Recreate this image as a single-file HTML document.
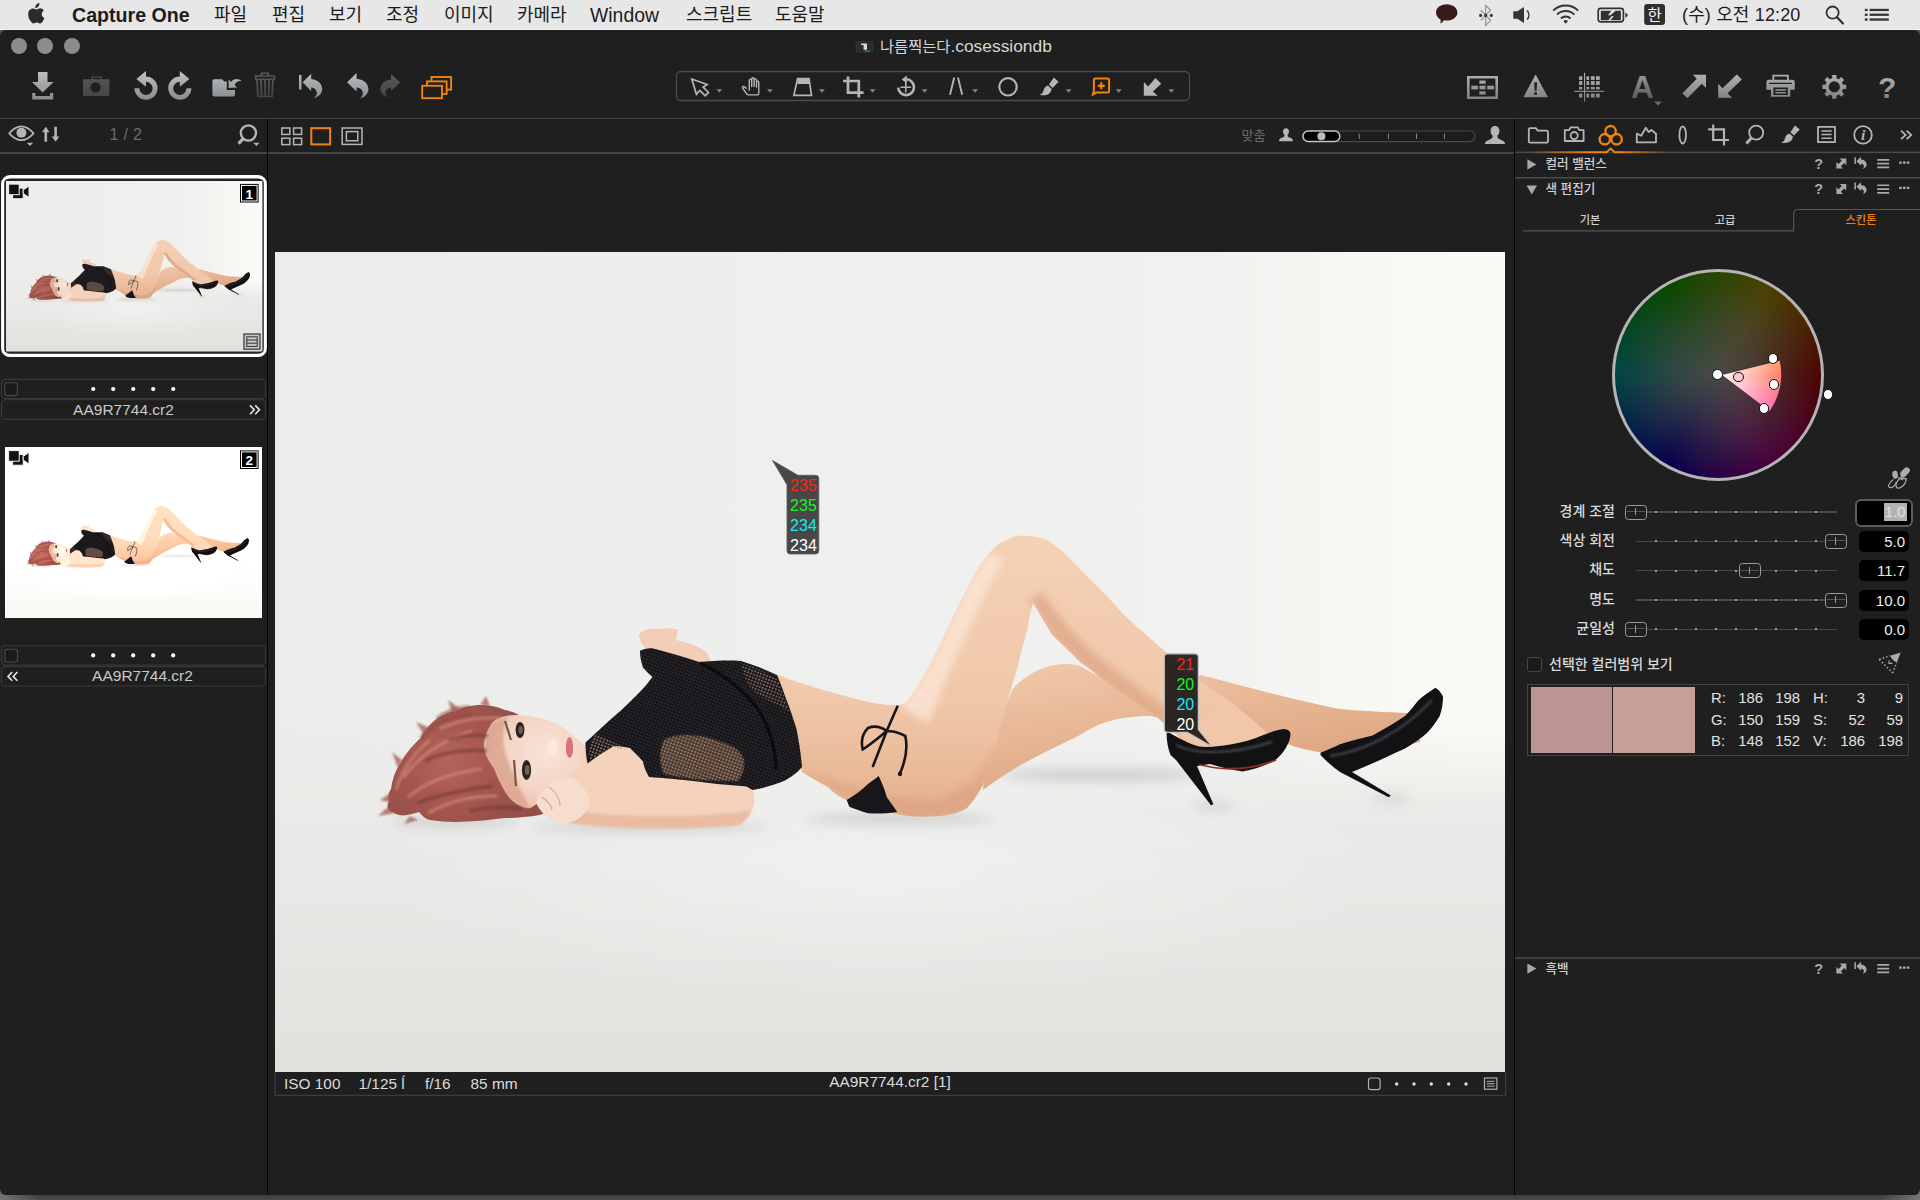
<!DOCTYPE html>
<html lang="ko">
<head>
<meta charset="utf-8">
<title>Capture One</title>
<style>
*{box-sizing:border-box;margin:0;padding:0}
html,body{width:1920px;height:1200px;overflow:hidden}
body{position:relative;background:#555;font-family:"Liberation Sans","Noto Sans CJK KR",sans-serif;color:#d0d0d0}
.abs{position:absolute}
/* ---------- menubar ---------- */
#menubar{position:absolute;left:0;top:0;width:1920px;height:29.500px;background:#e7e7e7;border-bottom:1.500px solid #f4f4f4}
#menubar .mi{position:absolute;top:1px;height:28px;line-height:28px;font-size:18px;color:#1c1c1c;white-space:nowrap}
#menubar .app{font-weight:bold;font-size:19.600px}
#menubar .lat{font-size:19.400px}
/* ---------- window ---------- */
#deskbot{position:absolute;left:0;top:1185px;width:1920px;height:15px;background:radial-gradient(circle at 0 100%,#767676 0,rgba(118,118,118,0) 40px),radial-gradient(circle at 100% 100%,#767676 0,rgba(118,118,118,0) 40px),linear-gradient(#3a3a3a 60%,#4a4a4a)}
#win{position:absolute;left:0;top:30px;width:1920px;height:1164.500px;background:#1f1f1f;border-radius:6px 6px 6px 6px;overflow:hidden}
.hl{position:absolute;height:1.500px;background:#444;box-shadow:0 1px 0 #1b1b1b}
.vl{position:absolute;width:1.400px;background:#000}
.tl{position:absolute;width:16px;height:16px;border-radius:8px;background:#8b8b90;top:7.500px}
#title{position:absolute;top:6.300px;left:880px;font-size:16px;line-height:20px;color:#d6d6d6;white-space:nowrap}
.ph{position:absolute;left:1545.500px;font-size:12.600px;line-height:17px;font-weight:500;color:#cfcfcf;white-space:nowrap}

#ce div{position:absolute}
.st{top:212.300px;width:60px;text-align:center;font-size:11.200px;line-height:16px;font-weight:500;color:#cfcfcf}
#wheel{left:1612.2px;top:268.5px;width:212px;height:212px;border-radius:50%;border:3.500px solid #b4b4b4;background:radial-gradient(circle closest-side,#494946 0%,rgba(73,73,70,0.600) 45%,rgba(73,73,70,0) 100%),conic-gradient(from 90deg,#4c0400,#48003e,#05004c,#004444,#084800,#4a4200,#4c0400)}
#wedge{left:1612.2px;top:268.5px;width:212px;height:212px;border-radius:50%;background:radial-gradient(circle closest-side,#fff 0%,rgba(255,255,255,0.850) 15%,rgba(255,255,255,0) 100%),conic-gradient(from 90deg,#ff2a00,#ff00e0,#0000ff,#00ffff,#00ff00,#ffff00,#ff2a00)}
.hd{width:10.800px;height:10.800px;border-radius:50%;border:1.400px solid #111}
.sl{left:1515px;width:100px;margin-top:-1.200px;text-align:right;font-size:14px;line-height:20px;font-weight:500;color:#dadada;white-space:nowrap}
.sl2{left:1549px;top:654px;font-size:14px;line-height:20px;font-weight:500;color:#dadada;white-space:nowrap}
.trk{left:1636px;width:201px;height:1.400px;background:#4a4a4a}
.trk::after{content:"";position:absolute;left:19.400px;top:-0.200px;width:162px;height:1.800px;background:repeating-linear-gradient(90deg,#a0a0a0 0,#a0a0a0 1.600px,transparent 1.600px,transparent 20px)}
.knob{width:22px;height:15px;border:1.300px solid #9a9a9a;border-radius:3.500px;background:#1f1f1f}
.knob::before{content:"";position:absolute;left:1px;right:1px;top:5.600px;height:1.200px;background:#555}
.knob::after{content:"";position:absolute;left:9px;top:2.500px;width:1.300px;height:7.400px;background:#9a9a9a}
.vb{left:1859px;width:50px;height:21px;border-radius:5px;background:#000;color:#ececec;font-size:15px;line-height:21px;text-align:right;padding-right:4px}
.vb.foc{left:1855px;width:57.500px;height:28.500px;border-radius:6px;border:2.200px solid #5c5c5c;padding:2.600px 3.800px 0 0;line-height:18px;color:#e2e2e2}
.vb.foc span{display:inline-block;background:#b3b3b3;height:18px;padding:0 1px 0 1px}
.cb{width:15px;height:15.500px;border:1.200px solid #454545;border-radius:3px;background:#1a1a1a}
#swbox{left:1527px;top:683.800px;width:382px;height:72.500px;border:1px solid #424242}
.sw{top:686.800px;height:66.400px}
.tv{font-size:14.900px;line-height:20px;color:#e2e2e2;white-space:nowrap}
.tv.r{text-align:right}
.fn{position:absolute;width:200px;text-align:center;font-size:15.500px;line-height:20px;color:#c9c9c9;white-space:nowrap}
.sb{position:absolute;top:1074px;font-size:15.400px;line-height:20px;color:#dcdcdc;white-space:nowrap}
svg{position:absolute;overflow:visible}
</style>
</head>
<body>
<div id="deskbot"></div>
<div id="menubar">
  <span class="mi app" style="left:72px">Capture One</span>
  <span class="mi" style="left:214px">파일</span>
  <span class="mi" style="left:272px">편집</span>
  <span class="mi" style="left:329px">보기</span>
  <span class="mi" style="left:386px">조정</span>
  <span class="mi" style="left:444px">이미지</span>
  <span class="mi" style="left:517px">카메라</span>
  <span class="mi lat" style="left:590px">Window</span>
  <span class="mi" style="left:686px">스크립트</span>
  <span class="mi" style="left:775px">도움말</span>
  <span class="mi" style="left:1682px;letter-spacing:0.150px">(수) 오전 12:20</span>
</div>
<div id="win">
  <div class="tl" style="left:11px"></div>
  <div class="tl" style="left:37px"></div>
  <div class="tl" style="left:64px"></div>
  <div id="title"><span style="font-size:15.300px">나름찍는다</span><span style="font-size:17.400px">.cosessiondb</span></div>
  <!-- main separators (coordinates relative to #win: y = page_y - 30) -->
  <div class="hl" style="left:0;top:87.900px;width:1920px"></div>
  <div class="hl" style="left:0;top:122.200px;width:1514px"></div>
  <div class="vl" style="left:266.900px;top:89px;height:1076px"></div>
  <div class="vl" style="left:1513.600px;top:89px;height:1076px"></div>
  <!-- LEFT -->
  <div id="left"></div>
  <!-- VIEWER -->
  <div id="viewer"></div>
  <!-- RIGHT -->
  <div id="right"></div>
</div>


<!-- ===== PHOTO SYMBOL (page coords of main viewer: x275..1505, y252..1072) ===== -->
<svg width="0" height="0" style="left:0;top:0">
<defs>
<linearGradient id="bgH" x1="275" y1="0" x2="1505" y2="0" gradientUnits="userSpaceOnUse"><stop offset="0" stop-color="#ececeb"/><stop offset="0.500" stop-color="#efefee"/><stop offset="0.760" stop-color="#f1f1ef"/><stop offset="0.880" stop-color="#f8f7f4"/><stop offset="1" stop-color="#fbfaf7"/></linearGradient>
<linearGradient id="flC" x1="0" y1="770" x2="0" y2="1072" gradientUnits="userSpaceOnUse"><stop offset="0" stop-color="#ebebe9"/><stop offset="0.350" stop-color="#e8e8e6"/><stop offset="1" stop-color="#e1e1de"/></linearGradient>
<linearGradient id="flM" x1="0" y1="730" x2="0" y2="810" gradientUnits="userSpaceOnUse"><stop offset="0" stop-color="#fff" stop-opacity="0"/><stop offset="1" stop-color="#fff" stop-opacity="1"/></linearGradient>
<mask id="flMask" maskUnits="userSpaceOnUse" x="275" y="700" width="1230" height="372"><rect x="275" y="700" width="1230" height="372" fill="url(#flM)"/></mask>
<radialGradient id="bgF" cx="880" cy="870" r="1" gradientUnits="userSpaceOnUse" gradientTransform="translate(880 870) scale(520 130) translate(-880 -870)"><stop offset="0" stop-color="#fff" stop-opacity="0.350"/><stop offset="1" stop-color="#fff" stop-opacity="0"/></radialGradient>
<linearGradient id="skA" x1="0" y1="530" x2="0" y2="820" gradientUnits="userSpaceOnUse"><stop offset="0" stop-color="#f5d1b6"/><stop offset="0.600" stop-color="#f0c7a9"/><stop offset="1" stop-color="#e4b08d"/></linearGradient>
<linearGradient id="skB" x1="1020" y1="660" x2="1040" y2="790" gradientUnits="userSpaceOnUse"><stop offset="0" stop-color="#f1c9ac"/><stop offset="1" stop-color="#e0a985"/></linearGradient>
<radialGradient id="hairG" cx="450" cy="762" r="78" gradientUnits="userSpaceOnUse"><stop offset="0" stop-color="#b5645a"/><stop offset="0.600" stop-color="#a4554d"/><stop offset="1" stop-color="#935049"/></radialGradient>
<radialGradient id="faceG" cx="545" cy="752" r="55" gradientUnits="userSpaceOnUse"><stop offset="0" stop-color="#f9e4d8"/><stop offset="0.700" stop-color="#f3d5c5"/><stop offset="1" stop-color="#ecc5b1"/></radialGradient>
<pattern id="mesh" width="3.200" height="3.200" patternUnits="userSpaceOnUse" patternTransform="rotate(20)"><circle cx="1.600" cy="1.600" r="1.050" fill="#b08a72"/></pattern>
<pattern id="mesh2" width="3.200" height="3.200" patternUnits="userSpaceOnUse" patternTransform="rotate(20)"><circle cx="1.600" cy="1.600" r="0.800" fill="#4a4040"/></pattern>
<filter id="soft" x="-20%" y="-100%" width="140%" height="300%"><feGaussianBlur stdDeviation="6"/></filter>
<filter id="soft2" x="-10%" y="-10%" width="120%" height="120%"><feGaussianBlur stdDeviation="1.200"/></filter>
<filter id="soft3" x="-20%" y="-20%" width="140%" height="140%"><feGaussianBlur stdDeviation="3.500"/></filter>
<clipPath id="bodyClip"><path id="bodyP" d="M776 674C800 684 830 692 860 700C880 705 895 706 905 704C915 692 925 674 932 661C940 645 946 632 951 621C958 606 965 592 972 579C978 568 983 560 988 555C994 547 1000 542 1007 540C1014 536 1020 535 1025 535.500C1034 536 1041 538 1047 540C1054 544 1058 548 1063 552C1076 565 1088 577 1100 589C1108 597 1116 606 1123 614C1138 628 1152 640 1167 653C1180 663 1190 672 1201 681C1212 689 1222 696 1232 703C1240 709 1247 715 1253 720L1270 736L1200 760L1171 729C1165 724 1160 720 1156 716C1144 708 1134 701 1123 694C1108 684 1094 672 1080 662C1070 652 1060 642 1052 635C1046 625 1040 614 1033 603C1030 612 1029 620 1028 627C1024 642 1020 656 1017 669C1010 692 1004 712 999 733C995 748 991 762 988 773C985 782 981 789 977 795C974 800 970 804 967 808C958 813 950 815 940 816C929 817 918 817 908 816C900 815 893 813 887 811L846 800C838 796 832 792 828 787C818 782 810 777 802 772Z"/></clipPath>
<symbol id="photo" viewBox="275 252 1230 820" preserveAspectRatio="none">
<rect x="275" y="252" width="1230" height="820" fill="url(#bgH)"/>
<rect x="275" y="700" width="1230" height="372" fill="url(#flC)" mask="url(#flMask)"/>
<rect x="275" y="700" width="1230" height="372" fill="url(#bgF)"/>
<!-- floor contact shadows -->
<g filter="url(#soft)" fill="#808080" opacity="0.300">
<ellipse cx="650" cy="827" rx="120" ry="4"/><ellipse cx="900" cy="819" rx="95" ry="5"/><ellipse cx="455" cy="822" rx="65" ry="4"/><ellipse cx="1213" cy="806" rx="22" ry="3"/><ellipse cx="1390" cy="798" rx="22" ry="3"/><ellipse cx="1100" cy="775" rx="100" ry="6"/>
</g>
<!-- far leg -->
<path d="M1012 690C1030 668 1060 660 1080 666C1120 690 1160 700 1201 675C1250 688 1300 701 1340 709C1370 712 1395 712 1420 714L1420 742C1380 752 1340 757 1318 752C1300 749 1290 745 1280 741L1150 716C1120 716 1100 722 1080 735C1050 750 1015 765 983 790C985 760 1000 720 1012 690Z" fill="url(#skB)"/>
<!-- torso + near thigh + near shin -->
<use href="#bodyP" fill="url(#skA)"/>
<g clip-path="url(#bodyClip)">
<path d="M1030 600C1040 616 1048 630 1056 640C1075 660 1100 680 1123 698L1171 733L1185 722C1150 696 1110 668 1088 648C1068 628 1054 610 1042 592Z" fill="#d79c7b" opacity="0.600" filter="url(#soft3)"/>
<path d="M900 706C912 694 922 676 930 662L950 622C958 606 964 592 971 579L990 552L1004 560C990 582 976 612 964 640C950 670 938 700 928 724Z" fill="#fdeadb" opacity="0.700" filter="url(#soft3)"/>
<path d="M800 770C830 790 870 806 910 818L975 812L1000 740L975 780L940 800L880 796Z" fill="#d79c7b" opacity="0.550" filter="url(#soft3)"/>
</g>
<!-- raised hand -->
<path d="M639 636C640 630 648 628 660 629C668 628 674 628 678 630L676 640C690 643 700 647 706 652L712 662L690 664L652 654C644 648 640 642 639 636Z" fill="#f3cdb6"/>
<!-- shoulder / neck / lower arm -->
<path d="M566 776C572 762 580 750 588 742L612 720L650 700L660 774L752 788C755 796 755 804 752 810C748 818 744 822 740 825C710 828 680 829 645 828.500C615 828 590 826 568 823C562 821 560 820 558 819L538 804C540 795 545 790 549 786C555 782 560 779 566 776Z" fill="#f4d2bb"/>
<path d="M568 823C590 826 615 828 645 828.500C680 829 710 828 740 825C744 822 748 818 752 810C720 816 660 818 600 814C580 812 565 808 552 800L538 804L558 819Z" fill="#dfa888" opacity="0.500" filter="url(#soft2)"/>
<!-- hair (back) -->
<path d="M519 715C514 712 510 711 505 710C496 706 487 704.500 477.500 705C470 705.500 462 708 455 711C448 712 441 716 435 720C429 725 424 731 421 737.500C413 745 405 754 399 765C395 772 392 780 391 789C388 793 388 797 389 801C386 806 388 810 392 812C397 815 402 816 407 815C412 814 416 813 419 812C422 816 426 819 430 820C442 822 455 822.500 467.500 821.500C480 821 492 819.500 505 818C516 818 528 817 540 815L548 812L530 760Z" fill="url(#hairG)"/>
<path d="M437 719C445 712 456 708 470 707M421 738C432 724 450 716 472 714" fill="none" stroke="#8f4a44" stroke-width="4" opacity="0.600" filter="url(#soft2)"/>
<path d="M392 792L380 800L392 803ZM389 806L378 816L395 813ZM402 760L392 752L398 768ZM424 735L416 722L430 728ZM452 712L448 700L460 709ZM480 705L486 696L490 706ZM410 816L404 824L418 820Z" fill="#a2574e" opacity="0.750" filter="url(#soft2)"/>
<!-- face -->
<path d="M519 715C532 716 545 719 555 722.500C564 728 570 733 575 737.500C581 741 584 745 586 749C587 754 585 758 582.500 762.500C578 768 573 772 567.500 776C560 782 552 788 545 794C540 800 536 806 530 808C522 808 514 803 509 797C503 789 498 778 494 768C488 760 484 752 484 744C485 736 488 729 492.500 722.500C498 717 508 714.500 519 715Z" fill="url(#faceG)"/>
<path d="M492.500 722.500C488 729 485 736 484 744C484 752 488 760 494 768C498 778 503 789 509 797C514 803 522 808 530 808C520 790 512 772 506 755C502 742 502 730 508 717Z" fill="#d99e88" opacity="0.700" filter="url(#soft2)"/>
<ellipse cx="553" cy="747" rx="5" ry="9" fill="#fdf0e8" opacity="0.700" filter="url(#soft2)"/>
<path d="M403 778C418 757 440 741 472 731M408 797C428 781 450 773 482 769M428 813C450 801 470 796 497 796M440 729C456 721 476 717 502 718M396 790C402 770 415 752 430 740" fill="none" stroke="#d39280" stroke-width="3.500" opacity="0.550" filter="url(#soft2)"/>
<path d="M425 761C445 751 465 749 487 751M418 803C440 794 460 791 492 786M470 811C490 806 505 807 522 809M448 740C462 735 476 734 488 736" fill="none" stroke="#69302d" stroke-width="3.500" opacity="0.500" filter="url(#soft2)"/>
<!-- eyes, brows, lips -->
<ellipse cx="520" cy="730" rx="4.400" ry="8" fill="#2a2420"/><ellipse cx="526.500" cy="770" rx="4.600" ry="10" fill="#2a2420"/>
<ellipse cx="520.600" cy="730" rx="2.200" ry="4" fill="#6a6058"/><ellipse cx="527.200" cy="770" rx="2.400" ry="5" fill="#6a6058"/>
<path d="M505 721L511 740M514 760L516 786" stroke="#7a5548" stroke-width="2.200" fill="none"/>
<ellipse cx="569.500" cy="747.500" rx="3.600" ry="10.500" fill="#d9747c"/>
<!-- fist -->
<path d="M536 803C538 795 543 790 549 786C553 781 560 778 567 777C574 778 580 782 584 788C588 793 590 798 589 803C588 810 584 815 578 819C572 823 565 824 558 822C549 820 541 813 536 803Z" fill="#f7ddcd"/>
<path d="M549 787C556 792 560 798 560 806M541 797C547 800 551 804 552 810" fill="none" stroke="#dba78f" stroke-width="1.500" opacity="0.800"/>
<!-- black top -->
<path d="M640 651C644 649 648 648 653 648.500C668 652 684 657 699 662C713 661 727 660 741 661C754 665 766 670 777 675C780 682 783 690 785 696C790 708 793 718 796.500 729C799 742 801 755 802 767C797 773 791 777 785 780.500C774 785 763 788 752.500 790L746.500 786.500C727 785 708 783 689 780.500C675 779 662 778 649 777C646 772 644 767 643 761.500C639 757 634 752 630 748C625 747 620 746 614 746C605 751 596 757 587.500 763.500C586 756 585.500 749 585.500 742.500C594 735 602 727 610.500 719.500L622 709.500C630 702 638 694 645 686.500L652.500 677C649 674 646 671 643 667.500C641 662 640 656 640 651Z" fill="#17161a"/>
<path d="M640 651C644 649 648 648 653 648.500C668 652 684 657 699 662C713 661 727 660 741 661C754 665 766 670 777 675C780 682 783 690 785 696C790 708 793 718 796.500 729C799 742 801 755 802 767C797 773 791 777 785 780.500C774 785 763 788 752.500 790L746.500 786.500C727 785 708 783 689 780.500C675 779 662 778 649 777C646 772 644 767 643 761.500C639 757 634 752 630 748C625 747 620 746 614 746C605 751 596 757 587.500 763.500C586 756 585.500 749 585.500 742.500C594 735 602 727 610.500 719.500L622 709.500C630 702 638 694 645 686.500L652.500 677C649 674 646 671 643 667.500C641 662 640 656 640 651Z" fill="url(#mesh2)" opacity="0.700"/>
<path d="M664 740C676 732 700 734 722 742C734 746 742 752 744 760C745 768 742 776 738 781L700 780C686 778 674 776 664 774C659 764 659 750 664 740Z" fill="#6f5646" opacity="0.550" filter="url(#soft2)"/>
<path d="M664 740C676 732 700 734 722 742C734 746 742 752 744 760C745 768 742 776 738 781L700 780C686 778 674 776 664 774C659 764 659 750 664 740Z" fill="url(#mesh)" opacity="0.750"/>
<path d="M742 664C754 667 768 673 778 680L790 712C780 706 764 700 752 690C746 682 742 672 742 664Z" fill="url(#mesh)" opacity="0.600"/>
<path d="M596 734L630 750L612 748L590 760C588 752 590 742 596 734Z" fill="url(#mesh)" opacity="0.700"/>
<path d="M700 663C720 672 745 690 760 712C770 730 776 750 776 770" fill="none" stroke="#0c0c0e" stroke-width="3.500"/>
<!-- bikini -->
<path d="M846.700 800C855 795 862 790 868 784C872 781 876 778 878.700 776C882 783 885 790 886.700 797C890 802 894 807 897.300 812C887 813.500 877 814 868 813.300C861 811 855 809 849.300 806.700Z" fill="#17161a"/>
<path d="M897.300 706.700L886.700 731L873 766M886.700 731C880 726 873 726 868 728C862 734 861 742 862.700 749.300C870 745 878 738 886.700 731C893 731 900 733 905.300 736C908 748 905 762 900 773.300" fill="none" stroke="#17161a" stroke-width="2.600" stroke-linecap="round"/>
<circle cx="900" cy="774" r="2.200" fill="#17161a"/>
<!-- near foot skin over shoe 1 -->
<path d="M1225 700L1253 720L1266 733L1240 745L1203 747L1180 736Z" fill="#f0c7a9"/>
<!-- shoe 1 -->
<path d="M1166.700 731.200C1172 734 1180 739 1190 743.500C1196 746 1200 747 1206 747C1220 746.500 1240 744 1256 738C1266 734 1276 729.500 1283.700 729C1288 729.500 1290.500 731 1290.500 734C1290.500 739 1288 744 1285.800 748C1283 753 1279 757 1275 760.500C1264 766 1253 770 1242.500 771.500C1231 770 1220 767 1210 764L1197 766L1213.400 804.300L1211 805.300L1176 760L1170.500 755C1167.500 747 1166.300 739 1166.700 731.200Z" fill="#121114"/>
<path d="M1199 764.500C1225 771.500 1250 770 1276 760" fill="none" stroke="#8e2f22" stroke-width="1.800"/>
<path d="M1176 745C1195 755 1230 755 1272 742" fill="none" stroke="#62626a" stroke-width="2.500" opacity="0.600" filter="url(#soft2)"/>
<!-- shoe 2 -->
<path d="M1435.400 687.800C1439 690 1441 693 1443 696.500C1443 703 1442 710 1439.700 716C1436 722 1432 728 1426.700 733.300C1420 739 1413 744 1405 748.500C1391 755 1376 762 1361.700 768L1352 772L1390.800 795.600L1388.600 797.300L1340 772C1333 767 1326 761 1320.500 755L1320.500 752.800C1327 750 1334 747 1340 744.200C1351 741 1362 738 1372.500 735.500C1384 729 1395 723 1405 716C1410 711 1414 706 1418 700.800C1423 696 1429 692 1435.400 687.800Z" fill="#121114"/>
<path d="M1330 756C1360 752 1400 735 1432 700" fill="none" stroke="#62626a" stroke-width="2.500" opacity="0.600" filter="url(#soft2)"/>
</symbol>
</defs>
</svg>
<svg id="mainphoto" width="1230" height="820" style="left:275px;top:252px"><use href="#photo" x="0" y="0" width="1230" height="820"/></svg>
<!-- ===== LEFT BROWSER ===== -->
<svg id="th1" width="257" height="171" style="left:5.500px;top:180.500px"><use href="#photo" x="0" y="0" width="257" height="171"/></svg>
<svg id="th2" width="257" height="171" style="left:5.300px;top:447px;filter:brightness(1.075) contrast(1.040)"><use href="#photo" x="0" y="0" width="257" height="171"/></svg>
<svg id="lp" width="1920" height="1200" viewBox="0 0 1920 1200" style="left:0;top:0">
<rect x="2.800" y="176.800" width="262.400" height="178.600" rx="7" fill="none" stroke="#fff" stroke-width="3.400"/>
<rect x="5" y="180" width="258" height="172" rx="2" fill="none" stroke="#2c2c2c" stroke-width="1.200"/>

<g>
<rect x="12.600" y="188.1" width="10.600" height="10.600" fill="#111" stroke="#f2f2f2" stroke-width="1"/>
<rect x="8.600" y="184.1" width="10.600" height="10.600" fill="#111" stroke="#f2f2f2" stroke-width="1"/>
<path d="M23.200 189.9l5.800-4v11.600l-5.800-4z" fill="#111" stroke="#f2f2f2" stroke-width="1" stroke-linejoin="round"/>
<rect x="240" y="183.9" width="18.600" height="18.600" fill="#000"/>
<rect x="241.500" y="185.4" width="15.600" height="15.600" fill="none" stroke="#fff" stroke-width="1"/>
<text x="249.300" y="198.7" font-family="Liberation Sans, sans-serif" font-weight="bold" font-size="13.500" text-anchor="middle" fill="#fff">1</text>
</g>

<g>
<rect x="12.600" y="454.6" width="10.600" height="10.600" fill="#111" stroke="#f2f2f2" stroke-width="1"/>
<rect x="8.600" y="450.6" width="10.600" height="10.600" fill="#111" stroke="#f2f2f2" stroke-width="1"/>
<path d="M23.200 456.4l5.800-4v11.600l-5.800-4z" fill="#111" stroke="#f2f2f2" stroke-width="1" stroke-linejoin="round"/>
<rect x="240" y="450.4" width="18.600" height="18.600" fill="#000"/>
<rect x="241.500" y="451.9" width="15.600" height="15.600" fill="none" stroke="#fff" stroke-width="1"/>
<text x="249.300" y="465.2" font-family="Liberation Sans, sans-serif" font-weight="bold" font-size="13.500" text-anchor="middle" fill="#fff">2</text>
</g>
<g><rect x="244" y="334" width="16" height="15.200" fill="#c8c8c8" stroke="#333" stroke-width="1.200"/><rect x="246.800" y="336.800" width="10.400" height="9.600" fill="none" stroke="#333" stroke-width="1"/><path d="M246.800 340h10.400M246.800 343.200h10.400" stroke="#333" stroke-width="1"/></g>

<rect x="1.500" y="379.4" width="264.200" height="19.200" rx="4" fill="none" stroke="#3a3a3a" stroke-width="1.100"/>
<rect x="1.500" y="399.8" width="264.200" height="19.600" rx="4" fill="none" stroke="#3a3a3a" stroke-width="1.100"/>
<rect x="4.800" y="382.79999999999995" width="12.600" height="12.800" rx="2.600" fill="#1a1a1a" stroke="#4a4a4a" stroke-width="1.100"/>
<circle cx="93.2" cy="389.0" r="2.100" fill="#fff"/><circle cx="113.2" cy="389.0" r="2.100" fill="#fff"/><circle cx="133.2" cy="389.0" r="2.100" fill="#fff"/><circle cx="153.2" cy="389.0" r="2.100" fill="#fff"/><circle cx="173.2" cy="389.0" r="2.100" fill="#fff"/><path d="M250 405.40000000000003l4.200 4.400-4.200 4.400M255.200 405.40000000000003l4.200 4.400-4.200 4.400" fill="none" stroke="#e8e8e8" stroke-width="1.600"/>

<rect x="1.500" y="645.8" width="264.200" height="19.200" rx="4" fill="none" stroke="#3a3a3a" stroke-width="1.100"/>
<rect x="1.500" y="666.4" width="264.200" height="19.600" rx="4" fill="none" stroke="#3a3a3a" stroke-width="1.100"/>
<rect x="4.800" y="649.1999999999999" width="12.600" height="12.800" rx="2.600" fill="#1a1a1a" stroke="#4a4a4a" stroke-width="1.100"/>
<circle cx="93.2" cy="655.4" r="2.100" fill="#fff"/><circle cx="113.2" cy="655.4" r="2.100" fill="#fff"/><circle cx="133.2" cy="655.4" r="2.100" fill="#fff"/><circle cx="153.2" cy="655.4" r="2.100" fill="#fff"/><circle cx="173.2" cy="655.4" r="2.100" fill="#fff"/><path d="M12.200 672.0l-4.200 4.400 4.200 4.400M17.400 672.0l-4.200 4.400 4.200 4.400" fill="none" stroke="#e8e8e8" stroke-width="1.600"/>
</svg>
<div class="fn" style="left:23.500px;top:399.500px">AA9R7744.cr2</div>
<div class="fn" style="left:42.500px;top:666px">AA9R7744.cr2</div>
<!-- ===== VIEWER STATUS BAR + READOUTS ===== -->
<svg id="vs" width="1920" height="1200" viewBox="0 0 1920 1200" style="left:0;top:0">
<path d="M275 1072v23.400h1230.600v-23.400" fill="none" stroke="#3c3c3c" stroke-width="1.200"/>
<rect x="1368.500" y="1078" width="11.600" height="11.600" rx="2.400" fill="none" stroke="#b0b0b0" stroke-width="1.200"/>
<g fill="#e0e0e0"><circle cx="1396.700" cy="1084" r="1.700"/><circle cx="1414" cy="1084" r="1.700"/><circle cx="1431.300" cy="1084" r="1.700"/><circle cx="1448.700" cy="1084" r="1.700"/><circle cx="1466" cy="1084" r="1.700"/></g>
<rect x="1484.500" y="1078" width="12.400" height="11.200" fill="none" stroke="#b0b0b0" stroke-width="1.200"/><path d="M1486.800 1081.300h7.800M1486.800 1083.700h7.800M1486.800 1086.100h7.800" stroke="#b0b0b0" stroke-width="1"/>
<!-- readout 1 -->
<path d="M772.500 460.500L798 475.300h17.600q3.200 0 3.200 3.200v72.300q0 3.200-3.200 3.200h-25.400q-3.200 0-3.200-3.200v-66z" fill="#474747" stroke="#5a5a5a" stroke-width="0.800"/>
<g font-family="Liberation Sans, sans-serif" font-size="16" text-anchor="end"><text x="816.800" y="490.800" fill="#ff2416">235</text><text x="816.800" y="510.800" fill="#10f626">235</text><text x="816.800" y="530.600" fill="#14ecf8">234</text><text x="816.800" y="550.600" fill="#fff">234</text></g>
<!-- readout 2 -->
<path d="M1167.500 653.800h27.600q3.200 0 3.200 3.200v72.500l14 17.200-25-14.400h-19.800q-3.200 0-3.200-3.200v-72.100q0-3.200 3.200-3.200z" fill="#161414" fill-opacity="0.900" stroke="#c4c4c4" stroke-width="1.200"/>
<g font-family="Liberation Sans, sans-serif" font-size="16" text-anchor="end"><text x="1194.200" y="670.200" fill="#ff2416">21</text><text x="1194.200" y="690.400" fill="#10f626">20</text><text x="1194.200" y="710.400" fill="#14ecf8">20</text><text x="1194.200" y="730.400" fill="#fff">20</text></g>
</svg>
<div class="sb" style="left:284px">ISO 100</div><div class="sb" style="left:358.500px">1/125 ĺ</div><div class="sb" style="left:425px">f/16</div><div class="sb" style="left:470.500px">85 mm</div>
<div class="sb" style="left:790px;width:200px;text-align:center;top:1071.500px">AA9R7744.cr2 [1]</div>
<!-- ===== MENUBAR ICONS ===== -->
<svg id="mb" width="1920" height="30" viewBox="0 0 1920 30" style="left:0;top:0">
<path d="M40.600 8.300c-1.700 0.100-3.200 1.100-4 1.100-0.900 0-2.200-1-3.700-1-2.400 0.100-4.700 2-4.700 5.800 0 2.400 0.900 4.900 2.100 6.600 1 1.400 1.900 2.600 3.200 2.600 1.200 0 1.700-0.800 3.200-0.800 1.500 0 1.900 0.800 3.200 0.800 1.300 0 2.200-1.300 3.100-2.500 0.900-1.400 1.300-2.700 1.400-2.800-0.100 0-2.700-1.100-2.700-4 0-2.500 2-3.600 2.100-3.700-1.200-1.700-2.900-2-3.200-2.100zM39.400 3c-1.100 0.100-2.400 0.800-3.100 1.700-0.700 0.800-1.200 2-1 3.200 1.200 0.100 2.400-0.600 3.100-1.500 0.700-0.900 1.200-2.100 1-3.400z" fill="#2c2c2c"/>
<path d="M1446.700 4.300c5.900 0 10.700 3.600 10.700 8.100s-4.800 8.100-10.700 8.100c-1 0-1.900-0.100-2.800-0.300-0.800 1.400-2.100 2.600-3.700 3.200 0.500-1.300 0.700-2.700 0.300-4-2.700-1.500-4.500-4-4.500-7 0-4.500 4.800-8.100 10.700-8.100z" fill="#3a191b"/>
<path d="M1480.800 10.200l9.800 10.100-4.900 5v-20l4.900 5-9.800 10.100" fill="none" stroke="#8c8c8c" stroke-width="1.100"/>
<g fill="#3a3a3a"><circle cx="1480.600" cy="15.400" r="1.600"/><circle cx="1485.700" cy="15.400" r="1.600"/><circle cx="1491.300" cy="15.400" r="1.600"/></g>
<path d="M1513.300 11.200h4l6.700-4.300v16.200l-6.700-4.300h-4z" fill="#333"/>
<path d="M1527.200 10.500a7 7 0 0 1 0 9" fill="none" stroke="#333" stroke-width="1.500"/>
<g fill="none" stroke="#333" stroke-width="1.900" stroke-linecap="butt"><path d="M1553.200 10.600a17.700 17.700 0 0 1 25 0"/><path d="M1557 14.600a12.300 12.300 0 0 1 17.400 0"/><path d="M1560.900 18.500a6.800 6.800 0 0 1 9.600 0"/></g>
<path d="M1565.700 23.700l-2.300-2.600a3.300 3.300 0 0 1 4.600 0z" fill="#333"/>
<rect x="1598.200" y="8.300" width="25.200" height="13.500" rx="2.600" fill="none" stroke="#333" stroke-width="1.700"/>
<path d="M1625.400 12.500q2.300 1 2.300 2.600t-2.300 2.600z" fill="#333"/>
<path d="M1600.800 10.800h10.600l-3.400 4.500h4.400l-4 5h-7.600zM1615.600 10.800h5.300v9.500h-10.500l3.300-4.400h-4.300z" fill="#333"/>
<rect x="1644.200" y="4" width="20.800" height="21" rx="3" fill="#2e2e2e"/>
<text x="1654.600" y="20.600" font-family="Noto Sans CJK KR, sans-serif" font-size="15.500" text-anchor="middle" fill="#f4f4f4">한</text>
<circle cx="1832.600" cy="12.600" r="6.100" fill="none" stroke="#333" stroke-width="1.800"/><path d="M1837 17.200l6 6.300" stroke="#333" stroke-width="2.300" stroke-linecap="round"/>
<g fill="#333"><rect x="1864.800" y="8.800" width="2.800" height="2.300"/><rect x="1869.600" y="8.800" width="19.200" height="2.300"/><rect x="1864.800" y="13.600" width="2.800" height="2.300"/><rect x="1869.600" y="13.600" width="19.200" height="2.300"/><rect x="1864.800" y="18.400" width="2.800" height="2.300"/><rect x="1869.600" y="18.400" width="19.200" height="2.300"/></g>
<g><rect x="856" y="41.600" width="17" height="10.600" rx="1" fill="#2a2d30" stroke="#3a3a3a" stroke-width="0.600"/><path d="M861 43.400h6v6.400h-3.400v-4.800h-2.600z" fill="#d8d8d8"/><rect x="865" y="50.600" width="5" height="1" fill="#1d9ce0"/></g>
</svg>
<!-- ===== TOP TOOLBAR ICONS (page coords) ===== -->
<svg id="tb" width="1920" height="1200" viewBox="0 0 1920 1200" style="left:0;top:0">
<defs>
<linearGradient id="gI" x1="0" y1="72" x2="0" y2="100" gradientUnits="userSpaceOnUse"><stop offset="0" stop-color="#bcbfc1"/><stop offset="1" stop-color="#858a8c"/></linearGradient>
<linearGradient id="gD" x1="0" y1="72" x2="0" y2="100" gradientUnits="userSpaceOnUse"><stop offset="0" stop-color="#5a5a5a"/><stop offset="1" stop-color="#424242"/></linearGradient>
</defs>
<g fill="url(#gI)">
<!-- import -->
<path d="M38 72h9.5v10h6L42.7 92.5 32 82h6z"/>
<path d="M32.2 93h3.2v3h14.6v-3h3.2v6.4H32.2z"/>
<!-- rotate left -->
<path d="M146 75.2v-5.400l-9.6 7.9 9.600 7.900v-5.100a6.600 6.600 0 1 1-6.600 6.600h-5.000a11.600 11.600 0 1 0 11.600-11.800z" transform="translate(0,1.2)"/>
<!-- rotate right -->
<path d="M179.800 75.2v-5.400l9.600 7.900-9.600 7.900v-5.100a6.600 6.600 0 1 0 6.600 6.600h5a11.600 11.600 0 1 1-11.600-11.800z" transform="translate(0,1.2)"/>
<!-- folder move -->
<path d="M212.400 81.200q0-2 2-2h7.800l2 2.300h2.600v8.600h8.200v4.400q0 2-2 2h-18.600q-2 0-2-2z"/>
<path d="M228.600 88v-8.400l2.500 2.300c2.500-3.400 7-4.300 10.800-0.600-3.300-0.800-5.700 0.600-7.300 3.700l2.600 2.600z"/>
<!-- reset -->
<rect x="299" y="75" width="2.500" height="14.600"/>
<path d="M302.600 82.300l8.600-8.600v5.300c7 0.600 11.200 5.200 11 10.400-0.200 4-3 7-8.600 8.800 3.400-2.400 4-5.400 2.400-8-1.200-1.700-2.800-2.500-4.800-2.600v3.600z"/>
<!-- undo -->
<path d="M347 82.300l9.600-9.300v5.700c7.600 0.600 12 5.400 11.800 10.800-0.200 4.200-3.200 7.400-9 9.300 3.600-2.500 4.200-5.700 2.600-8.400-1.300-1.800-3.200-2.700-5.400-2.800v4z"/>
</g>
<g fill="url(#gD)">
<!-- camera -->
<path d="M83 79.200h8.600v-2.700h9.800v2.700h8v16.700H83zM92.800 77.600v1.600h7.400v-1.600zM95.600 82.200a5.200 5.200 0 1 0 0.010 0z" fill-rule="evenodd"/>
<!-- trash -->
<path d="M260.800 72.500h8.400v2.800h6v4.600h-1.300l-1 17.400h-15.800l-1-17.400h-1.200v-4.600h5.900zM262.400 74v1.300h5.200V74zM256.500 76.800v1.600h17.200v-1.600zM258 80l0.900 15.800h1.700L260 80zM262 80l0.400 15.800h1.800V80zM266 80v15.800h1.800L268.200 80zM270 80l-0.500 15.800h1.700L272 80z" fill-rule="evenodd"/>
<!-- redo -->
<path d="M400.200 82.600l-9.200-8.500v5.300c-6.800 0.600-10.800 5-10.600 9.800 0.200 3.800 2.900 6.600 8.100 8.300-3.200-2.300-3.800-5.100-2.300-7.500 1.200-1.700 2.900-2.500 4.800-2.600v3.700z"/>
</g>
<!-- stack (orange) -->
<g fill="#1f1f1f" stroke="#f0830f" stroke-width="1.900">
<rect x="431.500" y="77" width="19.600" height="12.600"/>
<rect x="427" y="81.400" width="19.600" height="12.600"/>
<rect x="422.200" y="85.800" width="19.800" height="12.400"/>
</g>
</svg>

<!-- ===== CURSOR TOOL GROUP ===== -->
<svg id="ct" width="1920" height="1200" viewBox="0 0 1920 1200" style="left:0;top:0">
<rect x="676.500" y="71.500" width="513" height="29" rx="4.500" fill="none" stroke="#4b4b4b" stroke-width="1.300"/>
<path d="M716.4 89.2h5.800l-2.900 3.600z" fill="#858585"/><path d="M767 89.2h5.800l-2.900 3.600z" fill="#858585"/><path d="M819 89.2h5.800l-2.900 3.600z" fill="#858585"/><path d="M869.7 89.2h5.800l-2.900 3.600z" fill="#858585"/><path d="M921.7 89.2h5.800l-2.900 3.600z" fill="#858585"/><path d="M972.2 89.2h5.800l-2.900 3.600z" fill="#858585"/><path d="M1065.7 89.2h5.800l-2.900 3.600z" fill="#858585"/><path d="M1115.9 89.2h5.800l-2.900 3.600z" fill="#858585"/><path d="M1168.4 89.2h5.800l-2.900 3.600z" fill="#858585"/>
<g fill="none" stroke="#b3b5b6" stroke-width="1.700" stroke-linejoin="miter">
<!-- pointer -->
<path d="M691.800 79l4.600 15.200 3.400-3.800 5.400 5.300 3.300-3.200-5.400-5.300 4-2.800z"/>
<!-- hand -->
<path d="M746.500 88.600c-1.500-1.800-3.400-2.600-4-1.600-0.500 1 0.800 2.200 2 3.700 1.200 1.600 1.800 3.800 3.800 4.200h9c1-0.200 1.500-1 1.500-2.200v-10.500c0-1.400-2.300-1.500-2.300 0v4.800-7c0-1.500-2.400-1.500-2.400 0v6.500-7.600c0-1.500-2.400-1.500-2.400 0v7.600-6.300c0-1.500-2.400-1.500-2.400 0v10.600" stroke-width="1.400" stroke-linejoin="round"/>
<!-- keystone -->
<path d="M797.600 78.500h11.400l2.500 16.800h-17.600z"/>
<!-- crop -->
<path d="M848 76.400v16.200h15.600M843 81h15.800v16.600" stroke-width="2.700"/>
<!-- rotate free -->
<path d="M906.500 79.300a7.900 7.900 0 1 1-8.300 8.300" stroke-width="2.600"/>
<path d="M905.800 82v10.600M900.500 87.300h10.600" stroke-width="1.500"/>
<!-- lines -->
<path d="M950 94.800l4.200-17.200M962.200 94.800l-4.200-17.200" stroke-width="1.900"/>
<!-- circle -->
<circle cx="1008" cy="86.800" r="8.700" stroke-width="2.100"/>
</g>
<g fill="#b3b5b6">
<path d="M798.300 78.200h10.400l0.900 5.800h-12.200z"/>
<path d="M906.800 75.600v7.600l-5.200-3.800z"/>
<!-- brush -->
<path d="M1053.800 77.400l4.800 4.300-6 6.200-3.600-3.400zM1048 85.500l3.700 3.600c-0.800 3.400-2.500 5.400-5.300 5.900-2.300 0.600-4.700 0.400-6.700-0.200 2.400-0.700 3.300-2 3.700-4 0.500-2.600 2-4.600 4.600-5.300z"/>
<!-- arrow SW -->
<path d="M1155.500 78l5.800 5.800-8.400 7.600 4.800 4.400h-13.900v-13.800l4.300 4.600z"/>
</g>
<!-- annotate (orange) -->
<path d="M1095.500 78.400h12q1.600 0 1.600 1.600v10.800q0 1.600-1.600 1.600h-11.200l-3.800 2.600 1.400-3.800v-11.200q0-1.600 1.600-1.600z" fill="none" stroke="#f0830f" stroke-width="2" stroke-linejoin="round"/>
<path d="M1100.200 82.300h2.200v2.400h2.400v2.200h-2.400v2.400h-2.200v-2.400h-2.400v-2.200h2.400z" fill="#f0830f"/>
</svg>

<!-- ===== RIGHT TOOLBAR ICONS ===== -->
<svg id="rt" width="1920" height="1200" viewBox="0 0 1920 1200" style="left:0;top:0">
<defs><linearGradient id="gA" x1="0" y1="74" x2="0" y2="98" gradientUnits="userSpaceOnUse"><stop offset="0" stop-color="#9a9a9a"/><stop offset="1" stop-color="#5c5c5c"/></linearGradient>
<linearGradient id="gR" x1="0" y1="74" x2="0" y2="99" gradientUnits="userSpaceOnUse"><stop offset="0" stop-color="#b0b3b4"/><stop offset="1" stop-color="#7e8283"/></linearGradient></defs>
<g fill="url(#gR)">
<!-- exposure evaluation -->
<path d="M1467 76h31v23h-31zM1469.600 78.600v17.800h25.800V78.600z" fill-rule="evenodd"/>
<rect x="1479.400" y="80.500" width="6.200" height="3.300"/><rect x="1471.300" y="85.700" width="6.600" height="3.700"/><rect x="1479.400" y="85.700" width="6.200" height="3.700"/><rect x="1487.300" y="85.700" width="6.600" height="3.700"/><rect x="1479.400" y="91.300" width="6.200" height="3.300"/>
<!-- warning -->
<path d="M1535.600 74.600l12.400 22.600h-24.600zM1534.200 82.200l0.500 8.600h1.900l0.500-8.600zM1535.600 92a1.500 1.500 0 1 0 0.010 0z" fill-rule="evenodd"/>
<!-- grid -->
<rect x="1579" y="76.3" width="3.4" height="3.6"/><rect x="1579" y="81.1" width="3.4" height="3.9"/><rect x="1579" y="86.9" width="3.4" height="2.5"/><rect x="1579" y="93.6" width="3.4" height="3.9"/><rect x="1586.4" y="76.3" width="2.8" height="3.6"/><rect x="1586.4" y="81.1" width="2.8" height="3.9"/><rect x="1586.4" y="86.9" width="2.8" height="2.5"/><rect x="1586.4" y="93.6" width="2.8" height="3.9"/><rect x="1590.9" y="76.3" width="3.8" height="3.6"/><rect x="1590.9" y="81.1" width="3.8" height="3.9"/><rect x="1590.9" y="86.9" width="3.8" height="2.5"/><rect x="1590.9" y="93.6" width="3.8" height="3.9"/><rect x="1596" y="76.3" width="3.8" height="3.6"/><rect x="1596" y="81.1" width="3.8" height="3.9"/><rect x="1596" y="86.9" width="3.8" height="2.5"/><rect x="1596" y="93.6" width="3.8" height="3.9"/>
<rect x="1584" y="72.800" width="1.100" height="28.800"/><rect x="1574.300" y="90.800" width="29.800" height="1.100"/>
<!-- arrows -->
<path d="M1692.800 74.800H1706V88l-4.200-4.200-14.400 14.400-5-5 14.400-14.400z"/>
<path d="M1718.200 83.800V97.700h13.900l-4.500-4.500 14.200-13.700-5-5-14.200 13.700z"/>
<!-- printer -->
<path d="M1772.400 74.800h16.400v5h3.600q2.400 0 2.400 2.400v7.600h-4.600v7h-19.200v-7h-4.600v-7.600q0-2.400 2.400-2.400h3.600zM1774.200 76.500v3.300h12.800v-3.300zM1769 82.800v1.300h23v-1.300zM1773.400 87.600v7.300h14.400v-7.300zM1775.300 89.200h10.600v1.500h-10.600zM1775.300 92h10.600v1.500h-10.600z" fill-rule="evenodd"/>
<!-- gear -->
<path d="M1832.16 78.16L1832.25 74.97L1836.35 74.97L1836.44 78.16L1838.97 79.21L1841.29 77.02L1844.18 79.91L1841.99 82.23L1843.04 84.76L1846.23 84.85L1846.23 88.95L1843.04 89.04L1841.99 91.57L1844.18 93.89L1841.29 96.78L1838.97 94.59L1836.44 95.64L1836.35 98.83L1832.25 98.83L1832.16 95.64L1829.63 94.59L1827.31 96.78L1824.42 93.89L1826.61 91.57L1825.56 89.04L1822.37 88.95L1822.37 84.85L1825.56 84.76L1826.61 82.23L1824.42 79.91L1827.31 77.02L1829.63 79.21ZM1828.70 86.9a5.6 5.6 0 1 0 11.2 0a5.6 5.6 0 1 0 -11.2 0Z" fill-rule="evenodd"/>
</g>
<text x="1642.300" y="97.600" font-family="Liberation Sans, sans-serif" font-weight="bold" font-size="31.500" text-anchor="middle" fill="url(#gA)">A</text>
<path d="M1654 101.600h8l-4 3.900z" fill="#6a6a6a"/>
<text x="1887.200" y="97.600" font-family="Liberation Sans, sans-serif" font-weight="bold" font-size="30" text-anchor="middle" fill="url(#gR)">?</text>
</svg>

<!-- ===== SECOND ROW: browser + viewer controls ===== -->
<svg id="r2" width="1920" height="1200" viewBox="0 0 1920 1200" style="left:0;top:0">
<g fill="none" stroke="#b3b5b6" stroke-width="1.700">
<!-- eye -->
<path d="M9.200 133.400q12.200-14 24.400 0q-12.200 13.600-24.400 0z" stroke-linejoin="round"/>
<!-- search browser -->
<circle cx="248.400" cy="133" r="7.600" stroke-width="2.400"/>
<path d="M243.400 138.400l-4.800 5.200" stroke-width="3.200"/>
<!-- grid view -->
<rect x="281.800" y="128" width="8" height="6.400" stroke-width="1.500"/><rect x="293.600" y="128" width="8" height="6.400" stroke-width="1.500"/><rect x="281.800" y="138.200" width="8" height="6.400" stroke-width="1.500"/><rect x="293.600" y="138.200" width="8" height="6.400" stroke-width="1.500"/>
<!-- proof view -->
<rect x="342.200" y="128" width="19.800" height="16.400" stroke-width="1.500"/><rect x="346.400" y="131.600" width="11.400" height="9.200" stroke-width="1.500"/>
</g>
<rect x="311.300" y="128.200" width="18.800" height="16.200" fill="none" stroke="#f0830f" stroke-width="2"/>
<g fill="#b3b5b6">
<circle cx="21.400" cy="132.800" r="5"/>
<path d="M26.800 142.800h6.400l-3.200 3.200zM253.200 142.800h6.400l-3.200 3.200z"/>
<!-- sort arrows -->
<path d="M45.800 126.800l3.800 5.400h-2.500v9.600h-2.600v-9.600h-2.500zM55.600 141.800l-3.800-5.400h2.500v-9.600h2.600v9.600h2.500z"/>
<!-- small person -->
<path d="M1286 128.200c2 0 3 1.600 3 3.400 0 1.400-0.600 2.600-1.400 3.400 0 1.600 0.600 2 2 2.600 2 0.800 3.400 1.600 3.400 3.600h-14c0-2 1.400-2.800 3.400-3.600 1.400-0.600 2-1 2-2.600-0.800-0.800-1.400-2-1.400-3.400 0-1.800 1-3.400 3-3.400z"/>
<!-- large person -->
<path d="M1495 126c2.900 0 4.400 2.300 4.400 5 0 2-0.800 3.700-2 4.800 0 2.200 0.800 2.900 2.800 3.700 2.900 1.200 4.900 2.300 4.900 4.500h-20.200c0-2.200 2-3.300 4.900-4.500 2-0.800 2.800-1.500 2.800-3.700-1.200-1.100-2-2.800-2-4.800 0-2.700 1.500-5 4.400-5z"/>
</g>
<!-- zoom slider -->
<rect x="1303" y="131" width="172" height="10.600" rx="5.300" fill="#1c1c1c" stroke="#484848" stroke-width="1.200"/>
<g stroke="#8a8a8a" stroke-width="1"><path d="M1359.200 133.600v5.400M1388.400 133.600v5.400M1416.500 133.600v5.400M1444.400 133.600v5.400"/></g>
<rect x="1303" y="131" width="36.800" height="10.600" rx="5.300" fill="#000" stroke="#c2c2c2" stroke-width="1.500"/>
<circle cx="1321.400" cy="136.300" r="4" fill="#bdbdbd"/>
<text x="109.600" y="140.400" font-family="Liberation Sans, sans-serif" font-size="16" fill="#6c6c6c" letter-spacing="0.300">1 / 2</text>
<text x="1241.500" y="140" font-family="Liberation Sans, Noto Sans CJK KR, sans-serif" font-size="13" fill="#6c6c6c">맞춤</text>
</svg>

<!-- ===== RIGHT PANEL: tabs + headers ===== -->
<svg id="rp" width="1920" height="1200" viewBox="0 0 1920 1200" style="left:0;top:0">
<defs><linearGradient id="gO" x1="1527" y1="0" x2="1668" y2="0" gradientUnits="userSpaceOnUse"><stop offset="0" stop-color="#f0830f" stop-opacity="0"/><stop offset="0.250" stop-color="#f0830f" stop-opacity="0.600"/><stop offset="0.450" stop-color="#f0830f"/><stop offset="0.650" stop-color="#f0830f"/><stop offset="1" stop-color="#f0830f" stop-opacity="0"/></linearGradient></defs>
<rect x="1515" y="151.600" width="405" height="1.500" fill="#4a4a4a"/>
<rect x="1515" y="177" width="405" height="1.500" fill="#4a4a4a"/>
<rect x="1515" y="957.300" width="405" height="1.500" fill="#4a4a4a"/>
<path d="M1527 152.300h79.600l4-3.800 4 3.800h54" fill="#1f1f1f" stroke="url(#gO)" stroke-width="1.900"/>
<g fill="none" stroke="#b3b5b6" stroke-width="1.800" stroke-linejoin="round">
<!-- folder -->
<path d="M1528.800 129.600q0-1.400 1.400-1.400h5.600l2 2.400h8.800q1.400 0 1.400 1.400v9.200q0 1.400-1.400 1.400h-16.400q-1.400 0-1.400-1.400z"/>
<!-- camera -->
<path d="M1564.800 130.200h4.400l1.400-2.800h7.200l1.400 2.800h4.400v10.800h-18.800z"/><circle cx="1574.200" cy="135.600" r="3.600"/>
<!-- exposure -->
<path d="M1636.800 142.400v-8.800l4.400 2.200 4.600-8 2.800 4.200 2.800-2 4.600 3.800v8.600z"/>
<!-- lens -->
<ellipse cx="1682.700" cy="134.900" rx="3.300" ry="8.600"/>
<!-- crop -->
<path d="M1713.200 124.400v15.600h15.800M1708.200 129.400h15.800v16" stroke-width="2.200" stroke-linejoin="miter"/>
<!-- search -->
<circle cx="1756.200" cy="132.600" r="7"/><path d="M1751.400 138l-5 5.400" stroke-width="3"/>
<!-- list -->
<rect x="1818" y="126.800" width="17" height="15.400"/><path d="M1821.400 131h10.200M1821.400 134.600h10.200M1821.400 138.200h10.200" stroke-width="1.500"/>
<!-- info -->
<circle cx="1863" cy="134.900" r="8.800"/>
<!-- chevrons -->
<path d="M1901 130.600l4.600 4.300-4.600 4.300M1906.600 130.600l4.600 4.300-4.600 4.300" stroke-linejoin="miter"/>
</g>
<!-- colour tab (orange) -->
<g fill="none" stroke="#f0830f" stroke-width="2.300"><circle cx="1610.600" cy="131.200" r="5.200"/><circle cx="1604.800" cy="139.200" r="5.200"/><circle cx="1616.600" cy="139.200" r="5.200"/></g>
<!-- brush tab -->
<path d="M1795 125.400l4.800 4.200-5.800 6-3.600-3.400zM1789.400 133.400l3.600 3.400c-0.800 3.300-2.400 5.200-5.200 5.800-2.200 0.500-4.600 0.400-6.600-0.200 2.400-0.700 3.300-2 3.700-4 0.500-2.500 1.900-4.300 4.500-5z" fill="#b3b5b6"/>
<text x="1863.200" y="140.400" font-family="Liberation Serif, serif" font-style="italic" font-weight="bold" font-size="15.500" text-anchor="middle" fill="#b3b5b6">i</text>
<!-- disclosure triangles -->
<path d="M1527.400 159.200l9 5.200-9 5.200z" fill="#a9a9a9"/>
<path d="M1526.600 185.600h10.400l-5.200 9z" fill="#a9a9a9"/>
<path d="M1527.400 963.400l9 5.200-9 5.200z" fill="#a9a9a9"/>

<text x="1818.800" y="169.0" font-family="Liberation Sans, sans-serif" font-weight="bold" font-size="14.500" text-anchor="middle" fill="#a9a9a9">?</text>
<path d="M1840 158.0h6.600v6.600l-2.100-2.100-3.300 3.300 2.100 2.100h-6.600v-6.600l2.100 2.100 3.300-3.300z" transform="translate(-0.300,0.600)" fill="#a9a9a9"/>
<path d="M1854.400 157.20000000000002h1.500v6.800h-1.500zM1856.400 161.20000000000002l4.600-4.400v2.700c3.600 0.300 5.700 2.600 5.600 5.200-0.100 2-1.500 3.500-4.300 4.400 1.700-1.200 2-2.700 1.200-4-0.600-0.900-1.500-1.300-2.500-1.300v1.900z" fill="#a9a9a9"/>
<path d="M1877.200 159.0h12v1.700h-12zM1877.200 162.8h12v1.700h-12zM1877.200 166.60000000000002h12v1.700h-12z" fill="#a9a9a9"/>
<path d="M1899.200 161.4h2.600v2.300h-2.600zM1903 161.4h2.600v2.300h-2.600zM1906.800 161.4h2.600v2.300h-2.600z" fill="#a9a9a9"/>

<text x="1818.800" y="194.39999999999998" font-family="Liberation Sans, sans-serif" font-weight="bold" font-size="14.500" text-anchor="middle" fill="#a9a9a9">?</text>
<path d="M1840 183.39999999999998h6.600v6.600l-2.100-2.100-3.300 3.300 2.100 2.100h-6.600v-6.600l2.100 2.100 3.300-3.300z" transform="translate(-0.300,0.600)" fill="#a9a9a9"/>
<path d="M1854.400 182.6h1.500v6.800h-1.500zM1856.400 186.6l4.600-4.400v2.700c3.600 0.300 5.700 2.600 5.600 5.200-0.100 2-1.500 3.500-4.300 4.400 1.700-1.200 2-2.700 1.200-4-0.600-0.900-1.500-1.300-2.500-1.300v1.900z" fill="#a9a9a9"/>
<path d="M1877.200 184.39999999999998h12v1.700h-12zM1877.200 188.2h12v1.700h-12zM1877.200 192.0h12v1.700h-12z" fill="#a9a9a9"/>
<path d="M1899.200 186.79999999999998h2.600v2.300h-2.600zM1903 186.79999999999998h2.600v2.300h-2.600zM1906.800 186.79999999999998h2.600v2.300h-2.600z" fill="#a9a9a9"/>

<text x="1818.800" y="974.0" font-family="Liberation Sans, sans-serif" font-weight="bold" font-size="14.500" text-anchor="middle" fill="#a9a9a9">?</text>
<path d="M1840 963.0h6.600v6.600l-2.100-2.100-3.300 3.300 2.100 2.100h-6.600v-6.600l2.100 2.100 3.300-3.300z" transform="translate(-0.300,0.600)" fill="#a9a9a9"/>
<path d="M1854.400 962.1999999999999h1.500v6.800h-1.500zM1856.400 966.1999999999999l4.600-4.400v2.700c3.600 0.300 5.700 2.600 5.600 5.200-0.100 2-1.500 3.500-4.300 4.400 1.700-1.200 2-2.700 1.200-4-0.600-0.900-1.500-1.300-2.500-1.300v1.900z" fill="#a9a9a9"/>
<path d="M1877.200 964.0h12v1.700h-12zM1877.200 967.8h12v1.700h-12zM1877.200 971.5999999999999h12v1.700h-12z" fill="#a9a9a9"/>
<path d="M1899.200 966.4h2.600v2.300h-2.600zM1903 966.4h2.600v2.300h-2.600zM1906.800 966.4h2.600v2.300h-2.600z" fill="#a9a9a9"/>

</svg>
<div class="ph" style="top:156px">컬러 밸런스</div>
<div class="ph" style="top:181px">색 편집기</div>
<div class="ph" style="top:961px">흑백</div>

<!-- ===== COLOUR EDITOR BODY ===== -->
<div id="ce">
<svg width="1920" height="1200" viewBox="0 0 1920 1200" style="left:0;top:0"><path d="M1523 230.800h270.600v-16.800q0-4.500 4.500-4.500h122" fill="none" stroke="#555" stroke-width="1.200"/></svg>
<div class="st" style="left:1560px">기본</div><div class="st" style="left:1695px">고급</div><div class="st" style="left:1831px;color:#f0830f">스킨톤</div>
<div id="wheel"></div><div id="wedge" style="clip-path:polygon(110.0px 106.5px,167.5px 92.3px,167.9px 94.4px,168.3px 96.6px,168.6px 98.8px,168.8px 100.9px,168.9px 103.1px,169.0px 105.3px,169.0px 107.5px,168.9px 109.7px,168.7px 111.9px,168.5px 114.1px,168.2px 116.3px,167.8px 118.5px,167.3px 120.6px,166.7px 122.7px,166.1px 124.8px,165.4px 126.9px,164.7px 129.0px,163.8px 131.0px,162.9px 133.0px,161.9px 135.0px,160.9px 136.9px,159.8px 138.8px,158.6px 140.7px,157.4px 142.5px)"></div>
<div class="hd" style="left:1712.1px;top:369.2px;background:#fff"></div><div class="hd" style="left:1733.0px;top:371.5px;background:#ffc9cf"></div><div class="hd" style="left:1767.5px;top:353.3px;background:#fff"></div><div class="hd" style="left:1768.6px;top:379.4px;background:#fff"></div><div class="hd" style="left:1758.5px;top:403.2px;background:#fff"></div><div class="hd" style="left:1822.7px;top:389.2px;background:#fff"></div>
<div class="sl" style="top:502.0px">경계 조절</div><div class="trk" style="top:511.4px"></div><div class="knob" style="left:1625.2px;top:504.5px"></div><div class="vb foc" style="top:498.5px"><span>1.0</span></div><div class="sl" style="top:531.2px">색상 회전</div><div class="trk" style="top:540.6px"></div><div class="knob" style="left:1825.2px;top:533.7px"></div><div class="vb" style="top:530.7px">5.0</div><div class="sl" style="top:560.5px">채도</div><div class="trk" style="top:569.9px"></div><div class="knob" style="left:1738.5px;top:563.0px"></div><div class="vb" style="top:560.0px">11.7</div><div class="sl" style="top:590.0px">명도</div><div class="trk" style="top:599.4px"></div><div class="knob" style="left:1825.2px;top:592.5px"></div><div class="vb" style="top:589.5px">10.0</div><div class="sl" style="top:619.2px">균일성</div><div class="trk" style="top:628.6px"></div><div class="knob" style="left:1625.2px;top:621.7px"></div><div class="vb" style="top:618.7px">0.0</div>
<div class="cb" style="left:1527px;top:656.500px"></div>
<div class="sl2">선택한 컬러범위 보기</div>
<div id="swbox"></div><div class="sw" style="left:1530.500px;background:#bb9695;width:81.500px"></div><div class="sw" style="left:1613px;background:#c69f98;width:82px"></div>
<div class="tv" style="left:1711px;top:687.5px">R:</div><div class="tv r" style="left:1713px;width:50px;top:687.5px">186</div><div class="tv r" style="left:1750px;width:50px;top:687.5px">198</div><div class="tv" style="left:1813px;top:687.5px">H:</div><div class="tv r" style="left:1815px;width:50px;top:687.5px">3</div><div class="tv r" style="left:1853px;width:50px;top:687.5px">9</div><div class="tv" style="left:1711px;top:709.5px">G:</div><div class="tv r" style="left:1713px;width:50px;top:709.5px">150</div><div class="tv r" style="left:1750px;width:50px;top:709.5px">159</div><div class="tv" style="left:1813px;top:709.5px">S:</div><div class="tv r" style="left:1815px;width:50px;top:709.5px">52</div><div class="tv r" style="left:1853px;width:50px;top:709.5px">59</div><div class="tv" style="left:1711px;top:731.2px">B:</div><div class="tv r" style="left:1713px;width:50px;top:731.2px">148</div><div class="tv r" style="left:1750px;width:50px;top:731.2px">152</div><div class="tv" style="left:1813px;top:731.2px">V:</div><div class="tv r" style="left:1815px;width:50px;top:731.2px">186</div><div class="tv r" style="left:1853px;width:50px;top:731.2px">198</div>
</div>

<!-- ===== small icons in colour editor ===== -->
<svg id="ci" width="1920" height="1200" viewBox="0 0 1920 1200" style="left:0;top:0">
<g fill="#a9adae"><ellipse cx="1895.100" cy="474.700" rx="2.800" ry="4.100" transform="rotate(-8 1895.100 474.700)"/>
<path d="M1900.300 472.600l4.200-4.300a3.100 3.100 0 0 1 4.400 4.400l-4.200 4.300-1 1-0.800-0.800-1 0.900-1.900-1.900 0.900-1-0.800-0.800z"/></g>
<g fill="none" stroke="#a9adae" stroke-width="1.200">
<path d="M1893.400 479.400c-2.300 1.900-4.500 4.400-4.700 6.200-0.200 1.600 1 2.400 2.600 2 2-0.500 3.800-2.600 5-5.400"/>
<path d="M1900 478.200c-2.400 2.300-4.400 5.400-4 8 0.300 1.800 2.100 2.400 4.100 1.500 3-1.300 5.700-4.800 6.300-8.800z"/>
<path d="M1898 477.500l5 2.500"/>
</g>
<path d="M1890 655.800l10.700-3.400-3.900 10.100c-3.200-1.500-5.400-3.800-6.800-6.700z" fill="#a9adae"/>
<g fill="none" stroke="#a9adae" stroke-width="1.500" stroke-dasharray="1.500 2.100"><path d="M1879.300 659.500l10.700-3.700"/><path d="M1879.300 659.500l13.300 13.500"/><path d="M1892.600 673l4.200-10.500"/></g>
<path d="M1889 660.200v3.200h3.400" fill="none" stroke="#a9adae" stroke-width="1.100"/>
</svg>
</body>
</html>
